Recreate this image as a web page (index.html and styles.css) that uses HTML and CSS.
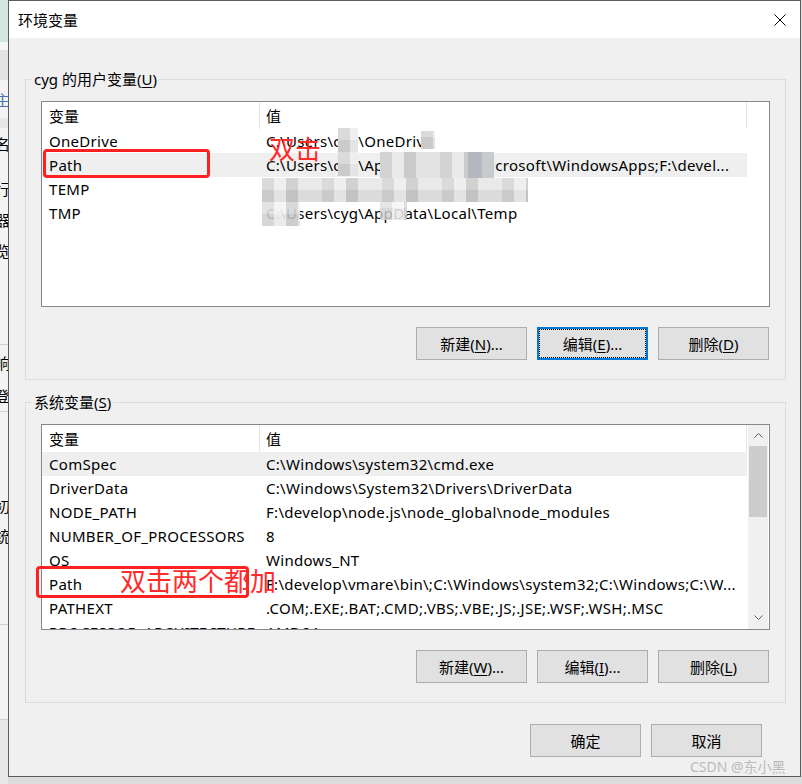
FILE: index.html
```html
<!DOCTYPE html>
<html lang="zh-CN">
<head>
<meta charset="utf-8">
<title>环境变量</title>
<link rel="stylesheet" href="styles.css">
</head>
<body>
<div class="desk">
  <div class="behind">
    <div class="seg s-teal"></div>
    <div class="seg s-gap8"></div>
    <div class="seg s-band30"></div>
    <div class="seg s-38 blue"><span class="g">主</span></div>
    <div class="seg s-band10"></div>
    <div class="seg s-30"><span class="g">名</span></div>
    <div class="seg s-15"></div>
    <div class="seg s-30"><span class="g">行</span></div>
    <div class="seg s-32"><span class="g">器</span></div>
    <div class="seg s-30"><span class="g">览</span></div>
    <div class="seg s-80 line-b"></div>
    <div class="seg s-35"><span class="g">响</span></div>
    <div class="seg s-32 line-b"><span class="g">登</span></div>
    <div class="seg s-78"></div>
    <div class="seg s-30"><span class="g">初</span></div>
    <div class="seg s-30"><span class="g">统</span></div>
    <div class="seg s-75 line-b"></div>
    <div class="seg s-95 line-b"></div>
    <div class="seg s-rest"></div>
  </div>

  <div class="dialog">
    <div class="titlebar">
      <span class="title">环境变量</span>
      <svg class="close" width="12" height="12" viewBox="0 0 12 12"><path d="M0.5 0.5 L11.5 11.5 M11.5 0.5 L0.5 11.5" stroke="#000" stroke-width="1" fill="none"/></svg>
    </div>

    <div class="content">
      <fieldset class="group">
        <legend>cyg 的用户变量(<u>U</u>)</legend>
        <div class="group-inner">
          <div class="list">
            <div class="cols">
              <div class="head"><div class="c1">变量</div><div class="c2">值</div></div>
              <div class="row"><div class="c1">OneDrive</div><div class="c2">C:\Users\cyg\OneDrive</div></div>
              <div class="row hl"><div class="c1">Path</div><div class="c2">C:\Users\cyg\AppData\Local\Microsoft\WindowsApps;F:\devel...</div></div>
              <div class="row"><div class="c1">TEMP</div><div class="c2">C:\Users\cyg\AppData\Local\Temp</div></div>
              <div class="row"><div class="c1">TMP</div><div class="c2">C:\Users\cyg\AppData\Local\Temp</div></div>
            </div>
          </div>
          <div class="btns">
            <div class="btn">新建(<u>N</u>)...</div>
            <div class="btn focus">编辑(<u>E</u>)...</div>
            <div class="btn">删除(<u>D</u>)</div>
          </div>
        </div>
      </fieldset>

      <fieldset class="group">
        <legend>系统变量(<u>S</u>)</legend>
        <div class="group-inner">
          <div class="list">
            <div class="cols">
              <div class="head"><div class="c1">变量</div><div class="c2">值</div></div>
              <div class="row hl"><div class="c1">ComSpec</div><div class="c2">C:\Windows\system32\cmd.exe</div></div>
              <div class="row"><div class="c1">DriverData</div><div class="c2">C:\Windows\System32\Drivers\DriverData</div></div>
              <div class="row"><div class="c1">NODE_PATH</div><div class="c2">F:\develop\node.js\node_global\node_modules</div></div>
              <div class="row"><div class="c1">NUMBER_OF_PROCESSORS</div><div class="c2">8</div></div>
              <div class="row"><div class="c1">OS</div><div class="c2">Windows_NT</div></div>
              <div class="row"><div class="c1">Path</div><div class="c2">F:\develop\vmare\bin\;C:\Windows\system32;C:\Windows;C:\W...</div></div>
              <div class="row"><div class="c1">PATHEXT</div><div class="c2">.COM;.EXE;.BAT;.CMD;.VBS;.VBE;.JS;.JSE;.WSF;.WSH;.MSC</div></div>
              <div class="row"><div class="c1">PROCESSOR_ARCHITECTURE</div><div class="c2">AMD64</div></div>
            </div>
            <div class="scroll">
              <div class="arrow up"><svg width="9" height="5" viewBox="0 0 9 5"><polyline points="0.5,4.5 4.5,0.5 8.5,4.5" stroke="#606060" stroke-width="1" fill="none"/></svg></div>
              <div class="thumb"></div>
              <div class="track"></div>
              <div class="arrow down"><svg width="9" height="5" viewBox="0 0 9 5"><polyline points="0.5,0.5 4.5,4.5 8.5,0.5" stroke="#606060" stroke-width="1" fill="none"/></svg></div>
            </div>
          </div>
          <div class="btns">
            <div class="btn">新建(<u>W</u>)...</div>
            <div class="btn">编辑(<u>I</u>)...</div>
            <div class="btn">删除(<u>L</u>)</div>
          </div>
        </div>
      </fieldset>

      <div class="footer">
        <div class="btn">确定</div>
        <div class="btn">取消</div>
      </div>
    </div>

    <div class="mosaic m1"></div>
    <div class="mosaic m2"></div>
    <div class="mosaic m3"></div>
    <div class="mosaic m4"></div>
    <div class="mosaic m5"></div>
    <div class="mosaic m6"></div>

    <div class="redbox r1"></div>
    <div class="redtext t1">双击</div>
    <div class="redbox r2"></div>
    <div class="redtext t2">双击两个都加</div>
  </div>
</div>
<div class="watermark">CSDN @东小黑</div>
</body>
</html>
```
FILE: styles.css
```css
* { box-sizing: border-box; }
html, body { margin: 0; padding: 0; }
body {
  width: 802px;
  height: 784px;
  overflow: hidden;
  background: #dcdcdc;
  font-family: "Noto Sans", "Noto Sans CJK SC", sans-serif;
  font-size: 15px;
  color: #000;
  position: relative;
}
u { text-decoration: underline; text-underline-offset: 2px; text-decoration-thickness: 1px; }

.desk { display: flex; height: 784px; align-items: flex-start; }

/* window behind the dialog */
.behind {
  width: 8px;
  flex: none;
  height: 784px;
  background: #f3f3f3;
  overflow: hidden;
  display: flex;
  flex-direction: column;
  font-family: "Noto Sans CJK SC", sans-serif;
  font-size: 15px;
}
.seg { flex: none; overflow: hidden; display: flex; align-items: center; }
.seg .g { display: block; margin-left: -5px; white-space: nowrap; }
.s-teal { height: 42px; background: #d4e6e2; }
.s-gap8 { height: 8px; background: #f6f6f6; }
.s-band30 { height: 30px; background: #e3e3e3; }
.s-38 { height: 38px; }
.s-band10 { height: 10px; background: #e6e6e6; }
.s-30 { height: 30px; }
.s-15 { height: 15px; }
.s-32 { height: 32px; }
.s-35 { height: 35px; }
.s-75 { height: 75px; }
.s-78 { height: 78px; }
.s-80 { height: 80px; }
.s-95 { height: 95px; }
.s-rest { flex: 1; background: #e8e8e8; }
.line-b { border-bottom: 1px solid #d2d2d2; }
.blue { color: #4a78b0; }

/* dialog */
.dialog {
  width: 793px;
  height: 777px;
  flex: none;
  border: 1px solid #5c5c5c;
  background: #f0f0f0;
  position: relative;
  display: flex;
  flex-direction: column;
}
.titlebar {
  height: 37px;
  flex: none;
  background: #fff;
  display: flex;
  align-items: center;
  justify-content: space-between;
  padding: 0 14px 0 9px;
}
.title { font-size: 15px; line-height: 20px; }
.close { display: block; }

.content { padding-top: 31px; display: flex; flex-direction: column; }

.group {
  margin: 0 14px 0 16px;
  padding: 0;
  border: 1px solid #dcdcdc;
  min-width: 0;
}
.group + .group { margin-top: 12px; }
.group legend {
  margin-left: 6px;
  padding: 0 2px;
  line-height: 20px;
  font-size: 15px;
}
.group-inner { padding: 12px 15px 19px; }

.list {
  height: 206px;
  border: 1px solid #828790;
  background: #fff;
  display: flex;
  gap: 1px;
  overflow: hidden;
}
.cols { width: 705px; flex: none; overflow: hidden; }
.head { display: flex; height: 27px; line-height: 28px; }
.head .c1 { width: 218px; border-right: 1px solid #e5e5e5; padding-left: 7px; }
.head .c2 { flex: 1; border-right: 1px solid #e5e5e5; padding-left: 6px; }
.row { display: flex; height: 24px; line-height: 24px; white-space: nowrap; letter-spacing: 0.3px; }
.row .c1 { width: 218px; flex: none; padding-left: 7px; overflow: hidden; }
.row .c2 { flex: 1; padding-left: 6px; overflow: hidden; }
.row.hl { background: #efefef; }

.scroll {
  width: 20px;
  flex: none;
  background: #f0f0f0;
  display: flex;
  flex-direction: column;
}
.arrow { display: flex; align-items: center; justify-content: center; flex: none; }
.arrow svg { display: block; }
.arrow.up { height: 21px; }
.arrow.down { height: 24px; }
.thumb { height: 71px; margin: 0 1px; background: #cdcdcd; flex: none; }
.track { flex: 1; }

.btns {
  display: flex;
  justify-content: flex-end;
  gap: 10px;
  margin-top: 20px;
  padding-right: 1px;
}
.btn {
  width: 111px;
  height: 33px;
  flex: none;
  border: 1px solid #adadad;
  background: #e1e1e1;
  display: flex;
  align-items: center;
  justify-content: center;
  font-size: 15px;
  white-space: nowrap;
}
.btn.focus {
  border: 2px solid #0078d7;
  outline: 1px dotted #000;
  outline-offset: -3px;
}
.footer {
  display: flex;
  justify-content: flex-end;
  gap: 10px;
  margin-top: 21px;
  padding-right: 38px;
}

/* privacy mosaic over the user paths */
.mosaic {
  position: absolute;
  background-color: #dedede;
  background-image:
    repeating-linear-gradient(90deg, rgba(0,0,0,0.05) 0 12px, rgba(255,255,255,0.35) 12px 24px, rgba(0,0,0,0.09) 24px 36px, rgba(255,255,255,0.15) 36px 60px),
    repeating-linear-gradient(0deg, rgba(0,0,0,0.04) 0 12px, rgba(255,255,255,0.25) 12px 24px);
}
.m1 { left: 329px; top: 127px; width: 20px; height: 48px; }
.m2 { left: 412px; top: 130px; width: 14px; height: 18px; }
.m3 { left: 371px; top: 151px; width: 114px; height: 26px;
  background-image:
    linear-gradient(90deg, transparent 0 88px, #b4b7bd 88px 102px, #c9cacc 102px 114px),
    repeating-linear-gradient(90deg, rgba(0,0,0,0.05) 0 12px, rgba(255,255,255,0.35) 12px 24px, rgba(0,0,0,0.09) 24px 36px, rgba(255,255,255,0.15) 36px 60px); }
.m4 { left: 253px; top: 177px; width: 266px; height: 24px; }
.m5 { left: 253px; top: 201px; width: 38px; height: 24px; background-color: rgba(230,230,230,0.85); }
.m6 { left: 371px; top: 201px; width: 27px; height: 18px; background-color: rgba(232,232,232,0.8); }

/* red annotations */
.redbox {
  position: absolute;
  border: 3px solid #ff2020;
  border-radius: 4px;
}
.r1 { left: 34px; top: 148px; width: 167px; height: 29px; }
.r2 { left: 27px; top: 565px; width: 213px; height: 32px; }
.redtext {
  position: absolute;
  color: #ff2a2a;
  font-family: "Noto Sans CJK SC", sans-serif;
  font-size: 26px;
  line-height: 26px;
  white-space: nowrap;
}
.t1 { left: 260px; top: 134px; }
.t2 { left: 111px; top: 566px; }

.watermark {
  position: absolute;
  left: 690px;
  top: 758px;
  font-family: "Noto Sans", "Noto Sans CJK SC", sans-serif;
  font-size: 14px;
  line-height: 18px;
  color: rgba(175, 175, 175, 0.85);
  white-space: nowrap;
}
```
